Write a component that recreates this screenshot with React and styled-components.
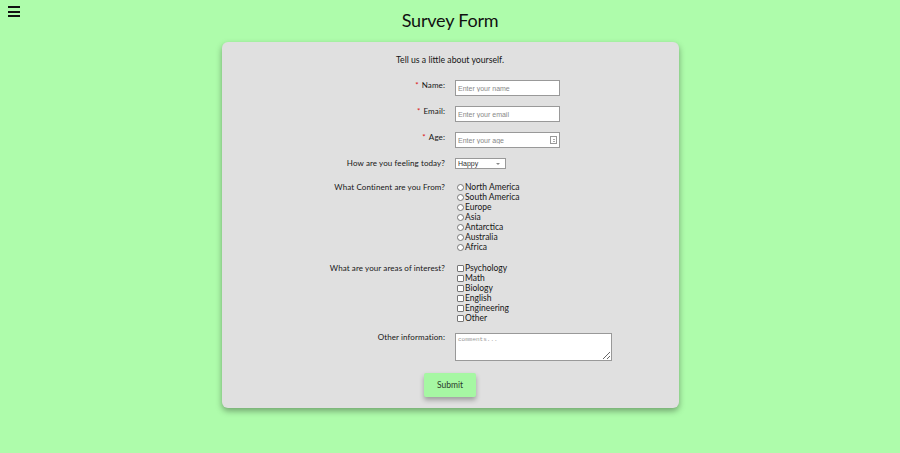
import React from "react";
import styled, { createGlobalStyle } from "styled-components";

const GlobalStyle = createGlobalStyle`
  body {
    margin: 0;
    background: #aefcab;
    font-family: "Lato", "DejaVu Sans", sans-serif;
    color: #161616;
  }
`;

const Page = styled.div`
  min-height: 453px;
  display: flex;
  flex-direction: column;
  align-items: center;
`;

const Header = styled.header`
  align-self: stretch;
  display: grid;
  grid-template-columns: 1fr auto 1fr;
  align-items: start;
`;

const Burger = styled.button`
  justify-self: start;
  margin: 6px 0 0 8px;
  width: 12px;
  height: 11px;
  padding: 0;
  border: none;
  background: none;
  display: flex;
  flex-direction: column;
  justify-content: space-between;
  span {
    display: block;
    height: 2px;
    background: #111;
  }
`;

const Title = styled.h1`
  margin: 9px 0 0;
  line-height: 22px;
  font-size: 18px;
  font-weight: 400;
  color: #111;
  letter-spacing: -0.2px;
`;

const Card = styled.form`
  margin-top: 11px;
  width: 457px;
  box-sizing: border-box;
  background: #e0e0e0;
  border-radius: 6px;
  box-shadow: 0 3px 6px rgba(0, 0, 0, 0.35);
  padding: 12px 0 11px;
  display: flex;
  flex-direction: column;
  align-items: center;
`;

const Intro = styled.p`
  margin: 0 0 15px;
  font-size: 8.7px;
  line-height: 11px;
`;

const Grid = styled.div`
  align-self: stretch;
  display: grid;
  grid-template-columns: 1fr 1fr;
  column-gap: 10px;
  row-gap: 10px;
`;

const Label = styled.label`
  justify-self: end;
  align-self: start;
  font-size: 8px;
  line-height: 11px;
  letter-spacing: 0.1px;
  margin-top: ${(p) => p.$top ?? 0}px;
`;

const Star = styled.span`
  color: #d11;
  margin-right: 3px;
`;

const TextInput = styled.input`
  width: 105px;
  height: 16px;
  box-sizing: border-box;
  border: 1px solid #999;
  padding: 0 2px;
  font-size: 7px;
  font-family: "Liberation Sans", sans-serif;
  background: #fff;
  &::placeholder {
    color: #888;
  }
`;

const AgeWrap = styled.div`
  width: 105px;
  height: 16px;
  box-sizing: border-box;
  border: 1px solid #999;
  background: #fff;
  display: flex;
  align-items: center;
  input {
    flex: 1;
    min-width: 0;
    border: none;
    outline: none;
    padding: 0 2px;
    font-size: 7px;
    font-family: "Liberation Sans", sans-serif;
    &::placeholder {
      color: #888;
    }
  }
`;

const Spin = styled.span`
  width: 7px;
  height: 8px;
  margin-right: 2px;
  border: 1px solid #999;
  box-sizing: border-box;
  display: flex;
  flex-direction: column;
  align-items: center;
  justify-content: center;
  gap: 1px;
  i {
    width: 0;
    height: 0;
    border-left: 1.5px solid transparent;
    border-right: 1.5px solid transparent;
  }
  i:first-child {
    border-bottom: 1.5px solid #555;
  }
  i:last-child {
    border-top: 1.5px solid #555;
  }
`;

const Select = styled.div`
  width: 51px;
  height: 11px;
  box-sizing: border-box;
  border: 1px solid #999;
  background: #fff;
  font-size: 7px;
  font-family: "Liberation Sans", sans-serif;
  line-height: 9px;
  padding-left: 2px;
  display: flex;
  justify-content: space-between;
  align-items: center;
  color: #333;
  &::after {
    content: "";
    width: 0;
    height: 0;
    margin-right: 5px;
    border-left: 2px solid transparent;
    border-right: 2px solid transparent;
    border-top: 2px solid #888;
  }
`;

const OptionList = styled.div`
  display: flex;
  flex-direction: column;
  padding: ${(p) => p.$pad};
`;

const Option = styled.label`
  display: flex;
  align-items: center;
  height: 10px;
  font-size: 8.5px;
  color: #161616;
  gap: 1px;
`;

const Radio = styled.span`
  width: 5px;
  height: 5px;
  margin-left: 2px;
  border: 1px solid #777;
  border-radius: 50%;
  background: #fff;
`;

const Check = styled.span`
  width: 5px;
  height: 5px;
  margin-left: 2px;
  border: 1px solid #777;
  border-radius: 1px;
  background: #fff;
`;

const TextArea = styled.textarea`
  display: block;
  margin: 0;
  width: 157px;
  height: 28px;
  box-sizing: border-box;
  border: 1px solid #999;
  resize: vertical;
  font-size: 6px;
  font-family: "Liberation Mono", monospace;
  padding: 2px;
  &::placeholder {
    color: #999;
  }
`;

const Submit = styled.button`
  margin-top: 12px;
  width: 52px;
  height: 24px;
  border: none;
  border-radius: 2px;
  background: #a6f7a3;
  color: #2a3a2a;
  font-family: inherit;
  font-size: 8.5px;
  box-shadow: 0 3px 5px rgba(0, 0, 0, 0.3);
`;

const continents = ["North America", "South America", "Europe", "Asia", "Antarctica", "Australia", "Africa"];
const interests = ["Psychology", "Math", "Biology", "English", "Engineering", "Other"];

const App = () => (
  <Page>
    <GlobalStyle />
    <Header>
      <Burger type="button" aria-label="menu">
        <span />
        <span />
        <span />
      </Burger>
      <Title>Survey Form</Title>
    </Header>
    <Card onSubmit={(e) => e.preventDefault()}>
      <Intro>Tell us a little about yourself.</Intro>
      <Grid>
        <Label><Star>*</Star>Name:</Label>
        <TextInput placeholder="Enter your name" />
        <Label><Star>*</Star>Email:</Label>
        <TextInput placeholder="Enter your email" />
        <Label><Star>*</Star>Age:</Label>
        <AgeWrap>
          <input placeholder="Enter your age" />
          <Spin><i /><i /></Spin>
        </AgeWrap>
        <Label>How are you feeling today?</Label>
        <Select>Happy</Select>
        <Label $top={3}>What Continent are you From?</Label>
        <OptionList $pad="3px 0 0">
          {continents.map((c) => (
            <Option key={c}><Radio />{c}</Option>
          ))}
        </OptionList>
        <Label $top={1}>What are your areas of interest?</Label>
        <OptionList $pad="1px 0 0">
          {interests.map((c) => (
            <Option key={c}><Check />{c}</Option>
          ))}
        </OptionList>
        <Label $top={-1}>Other information:</Label>
        <TextArea placeholder="comments..." />
      </Grid>
      <Submit type="submit">Submit</Submit>
    </Card>
  </Page>
);

export default App;
